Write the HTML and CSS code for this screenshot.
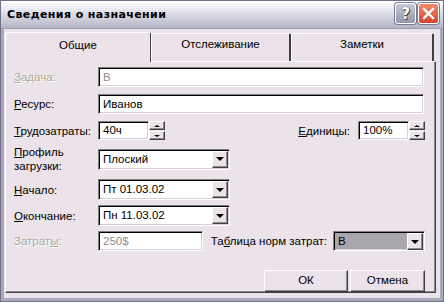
FILE: index.html
```html
<!DOCTYPE html>
<html lang="ru">
<head>
<meta charset="utf-8">
<title>Сведения о назначении</title>
<link rel="stylesheet" href="styles.css">
</head>
<body>
<div class="window">
  <div class="titlebar">
    <span class="title">Сведения о назначении</span>
    <div class="caption-btns">
      <span class="cbtn help">?</span>
      <span class="cbtn close">
        <svg width="13" height="13" viewBox="0 0 13 13"><path d="M2 2 L11 11 M11 2 L2 11" stroke="#fff" stroke-width="2.4" stroke-linecap="square"/></svg>
      </span>
    </div>
  </div>
  <div class="client">
    <div class="tabs">
      <div class="tab tab-1 active">Общие</div>
      <div class="tab tab-2">Отслеживание</div>
      <div class="tab tab-3">Заметки</div>
    </div>
    <div class="panel">
      <div class="row row-task">
        <span class="lbl off"><u>З</u>адача:</span>
        <div class="edit wide grey">В</div>
      </div>
      <div class="row row-res">
        <span class="lbl"><u>Р</u>есурс:</span>
        <div class="edit wide">Иванов</div>
      </div>
      <div class="row row-work">
        <span class="lbl"><u>Т</u>рудозатраты:</span>
        <div class="spin">
          <div class="edit spin-edit">40ч</div>
          <div class="spin-btns">
            <span class="sbtn"><i class="tri up"></i></span>
            <span class="sbtn"><i class="tri down"></i></span>
          </div>
        </div>
        <span class="lbl units-lbl"><u>Е</u>диницы:</span>
        <div class="spin">
          <div class="edit spin-edit">100%</div>
          <div class="spin-btns">
            <span class="sbtn"><i class="tri up"></i></span>
            <span class="sbtn"><i class="tri down"></i></span>
          </div>
        </div>
      </div>
      <div class="row row-prof">
        <span class="lbl"><u>П</u>рофиль<br>загрузки:</span>
        <div class="edit combo">Плоский<span class="ddbtn"><i class="tri down big"></i></span></div>
      </div>
      <div class="row row-start">
        <span class="lbl"><u>Н</u>ачало:</span>
        <div class="edit combo">Пт 01.03.02<span class="ddbtn"><i class="tri down big"></i></span></div>
      </div>
      <div class="row row-end">
        <span class="lbl"><u>О</u>кончание:</span>
        <div class="edit combo">Пн 11.03.02<span class="ddbtn"><i class="tri down big"></i></span></div>
      </div>
      <div class="row row-cost">
        <span class="lbl off">Затрат<u>ы</u>:</span>
        <div class="edit cost grey">250$</div>
        <span class="lbl table-lbl">Та<u>б</u>лица норм затрат:</span>
        <div class="edit combo table-combo">В<span class="ddbtn"><i class="tri down big"></i></span></div>
      </div>
      <div class="row row-btns">
        <span class="btn btn-ok">ОК</span>
        <span class="btn btn-cancel">Отмена</span>
      </div>
    </div>
  </div>
</div>
</body>
</html>
```

FILE: styles.css
```css
* { box-sizing: border-box; }
html, body { margin: 0; padding: 0; }
body {
  width: 444px;
  height: 302px;
  overflow: hidden;
  font-family: "Liberation Sans", Arial, sans-serif;
  font-size: 11.5px;
  color: #000;
}
u { text-decoration: underline; text-underline-offset: 1px; }

.window {
  width: 444px;
  height: 302px;
  display: flex;
  flex-direction: column;
  background: #A9A9BE;
  border: 1px solid #6F6F88;
}

.titlebar {
  height: 28px;
  flex: none;
  display: flex;
  align-items: center;
  padding: 0 4px 0 6px;
  background: linear-gradient(#FEFEFF 0%, #EDEDF3 25%, #D3D3DF 60%, #B4B4C6 100%);
  border-bottom: 1px solid #9C9CB2;
}
.title {
  font-family: "DejaVu Sans", sans-serif;
  font-weight: bold;
  font-size: 11px;
  letter-spacing: 0.4px;
  color: #000;
  flex: 1;
}
.caption-btns { display: flex; gap: 2px; margin-top: -2px; }
.cbtn {
  width: 21px;
  height: 21px;
  border-radius: 3px;
  border: 1px solid #fff;
  display: flex;
  align-items: center;
  justify-content: center;
  box-shadow: 0 0 0 1px #7A7A90;
}
.help {
  background: linear-gradient(#C8CAD8, #9296AE);
  color: #fff;
  font-family: "DejaVu Sans", sans-serif;
  font-weight: bold;
  font-size: 15px;
  text-shadow: 0 0 1px #333, 1px 1px 0 #444;
}
.close {
  background: linear-gradient(#F08B6E, #D5422A);
}

.client {
  flex: 1;
  background: #EBE3E9;
  margin: 0 3px 3px;
  padding: 2px 3px 5px 1px;
  display: flex;
  flex-direction: column;
}

.tabs {
  display: flex;
  height: 31px;
  align-items: flex-end;
  position: relative;
  z-index: 1;
  margin-bottom: -1px;
}
.tab {
  height: 28px;
  background: #EBE3E9;
  border-top: 1px solid #fff;
  border-left: 1px solid #fff;
  border-right: 2px solid #404040;
  border-radius: 2px 2px 0 0;
  text-align: center;
  line-height: 14px;
  padding-top: 3px;
  margin-bottom: 1px;
}
.tab.active {
  height: 30px;
  margin-bottom: 0;
  padding-top: 5px;
  border-right: 1px solid #404040;
}
.tab-1 { width: 146px; }
.tab-2 { width: 140px; }
.tab-3 { width: 143px; }

.panel {
  flex: 1;
  border-top: 1px solid #fff;
  border-left: 1px solid #fff;
  border-right: 1px solid #404040;
  border-bottom: 1px solid #404040;
  box-shadow: inset -1px -1px 0 #8C8C8C;
  padding: 5px 0 0 8px;
  width: 431px;
}

.row { display: flex; align-items: center; }
.lbl { width: 84px; flex: none; line-height: 14px; }
.lbl.off { color: #ACA899; text-shadow: 1px 1px 0 #fff; }

.edit {
  height: 20px;
  background: #fff;
  border-top: 1px solid #808080;
  border-left: 1px solid #808080;
  border-bottom: 1px solid #fff;
  border-right: 1px solid #fff;
  box-shadow: inset 1px 1px 0 #000, inset -1px -1px 0 #D6D0D4;
  padding: 0 0 0 4px;
  line-height: 18px;
  white-space: nowrap;
  position: relative;
}
.edit.grey { color: #8E8E8E; }
.wide { width: 326px; }

.row-task { margin-top: 0; }
.row-res { margin-top: 7px; }
.row-work { margin-top: 7px; height: 19px; }
.row-prof { margin-top: 5px; }
.row-start { margin-top: 6px; }
.row-end { margin-top: 5px; }
.row-cost { margin-top: 5px; }
.row-btns { margin-top: 19px; }

.spin { display: flex; }
.spin-edit { width: 51px; height: 19px; line-height: 17px; }
.spin-btns { display: flex; flex-direction: column; gap: 1px; width: 16px; }
.sbtn {
  height: 9px;
  background: #EBE3E9;
  border-top: 1px solid #fff;
  border-left: 1px solid #fff;
  border-right: 1px solid #404040;
  border-bottom: 1px solid #404040;
  box-shadow: inset -1px -1px 0 #8C8C8C;
  display: flex;
  align-items: center;
  justify-content: center;
}
.units-lbl { width: auto; margin-left: auto; margin-right: 8px; }
.row-work .spin:last-child { margin-right: 10px; }

.tri { display: block; width: 0; height: 0; border-left: 3px solid transparent; border-right: 3px solid transparent; }
.tri.up { border-bottom: 2px solid #000; }
.tri.down { border-top: 2px solid #000; }
.tri.big { border-left-width: 4px; border-right-width: 4px; border-top-width: 4px; }

.combo { width: 132px; height: 21px; line-height: 19px; }
.ddbtn {
  position: absolute;
  right: 1px;
  top: 1px;
  width: 16px;
  height: 17px;
  background: #EBE3E9;
  border-top: 1px solid #fff;
  border-left: 1px solid #fff;
  border-right: 1px solid #404040;
  border-bottom: 1px solid #404040;
  box-shadow: inset -1px -1px 0 #8C8C8C;
  display: flex;
  align-items: center;
  justify-content: center;
}

.cost { width: 105px; }
.table-lbl { width: auto; margin-left: auto; margin-right: 6px; }
.table-combo { width: 92px; height: 20px; line-height: 18px; background: #A9A7AD; margin-right: 10px; }

.row-btns { justify-content: flex-end; padding-right: 10px; gap: 2px; }
.btn {
  height: 22px;
  text-align: center;
  line-height: 19px;
  background: #EBE3E9;
  border-top: 1px solid #fff;
  border-left: 1px solid #fff;
  border-right: 1px solid #404040;
  border-bottom: 1px solid #404040;
  box-shadow: inset -1px -1px 0 #8C8C8C;
}
.btn-ok { width: 84px; }
.btn-cancel { width: 75px; }
```
